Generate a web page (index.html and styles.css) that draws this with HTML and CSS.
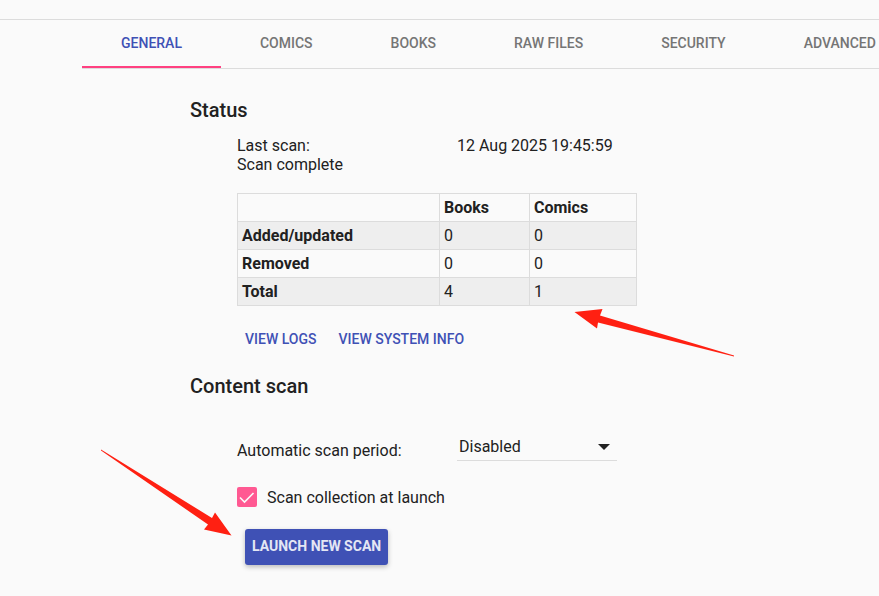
FILE: index.html
```html
<!DOCTYPE html>
<html lang="en">
<head>
<meta charset="utf-8">
<title>Settings</title>
<link rel="stylesheet" href="styles.css">
</head>
<body>
<header class="topbar"></header>
<nav class="tabs">
  <a class="tab active" href="#general">GENERAL</a>
  <a class="tab" href="#comics">COMICS</a>
  <a class="tab" href="#books">BOOKS</a>
  <a class="tab" href="#raw">RAW FILES</a>
  <a class="tab" href="#security">SECURITY</a>
  <a class="tab" href="#advanced">ADVANCED</a>
</nav>
<main class="content">
  <section>
    <h2>Status</h2>
    <div class="group">
      <div class="row"><span class="label">Last scan:</span><span>12 Aug 2025 19:45:59</span></div>
      <div class="row">Scan complete</div>
      <table class="stats">
        <thead>
          <tr><td class="name"></td><th class="books" scope="col">Books</th><th scope="col">Comics</th></tr>
        </thead>
        <tbody>
          <tr class="shaded"><th scope="row">Added/updated</th><td>0</td><td>0</td></tr>
          <tr><th scope="row">Removed</th><td>0</td><td>0</td></tr>
          <tr class="shaded"><th scope="row">Total</th><td>4</td><td>1</td></tr>
        </tbody>
      </table>
      <div class="links">
        <a href="#logs">VIEW LOGS</a>
        <a href="#system">VIEW SYSTEM INFO</a>
      </div>
    </div>
  </section>
  <section>
    <h2>Content scan</h2>
    <div class="group">
      <div class="field">
        <label class="label" for="period">Automatic scan period:</label>
        <div class="picker">
          <select id="period"><option>Disabled</option></select>
          <svg class="caret" width="12" height="6" viewBox="0 0 12 6"><path d="M0 0h12L6 6z" fill="#212121"/></svg>
        </div>
      </div>
      <label class="check">
        <span class="box">
          <input type="checkbox" checked>
          <svg class="tick" width="20" height="20" viewBox="0 0 20 20"><path d="M3 10.500L7.500 15L16.500 6" fill="none" stroke="#fafafa" stroke-width="1.600"/></svg>
        </span>
        <span>Scan collection at launch</span>
      </label>
      <button class="launch" type="button">LAUNCH NEW SCAN</button>
    </div>
  </section>
  <section>
    <h2>Theme</h2>
  </section>
</main>
<svg class="arrow arrow-total" width="160" height="49" viewBox="574 308 160 49"><path d="M574.500 312L602.500 309L600 315.500L734 355.500V356.500L598 322.500L597 328.500Z" fill="#ff2012"/></svg>
<svg class="arrow arrow-launch" width="132" height="88" viewBox="100 449 132 88"><path d="M101 449.500L212 518L215 512.500L231.500 535.500L204 529.500L208 524.500L101 450.500Z" fill="#ff2012"/></svg>
</body>
</html>
```
FILE: styles.css
```css
* {
  box-sizing: border-box;
}

body {
  position: relative;
  margin: 0;
  height: 100vh;
  overflow: hidden;
  background: #fafafa;
  color: #212121;
  font: 16px/19px Roboto, sans-serif;
}

a {
  color: #3f51b5;
  text-decoration: none;
}

.topbar {
  height: 20px;
  border-bottom: 1px solid #dcdcdc;
}

.tabs {
  display: flex;
  margin-left: 82px;
  height: 49px;
  border-bottom: 1px solid #dcdcdc;
  overflow: hidden;
}

.tab {
  flex: none;
  padding: 0 39px;
  border-bottom: 2px solid transparent;
  color: #757575;
  font-size: 14px;
  font-weight: 500;
  line-height: 46px;
}

.tab.active {
  color: #3f51b5;
  border-bottom-color: #ff4081;
}

.content {
  padding: 29px 0 0 190px;
}

h2 {
  margin: 0;
  font-size: 20px;
  font-weight: 500;
  line-height: 24px;
}

.group {
  padding: 14px 0 0 47px;
}

.row {
  display: flex;
}

.label {
  width: 220px;
}

.stats {
  width: 400px;
  margin-top: 19px;
  border-collapse: collapse;
}

.stats th,
.stats td {
  height: 28px;
  padding: 4px;
  border: 1px solid #dcdcdc;
  text-align: left;
}

.stats .name {
  width: 202px;
}

.stats .books {
  width: 90px;
}

.shaded {
  background: #eeeeee;
}

.links {
  display: flex;
  gap: 22px;
  padding: 24px 0 25px 8px;
  font-size: 14px;
  font-weight: 500;
}

.field {
  display: flex;
  align-items: flex-end;
  margin-top: 22px;
}

.field .label {
  padding-bottom: 1px;
}

.picker {
  position: relative;
  width: 160px;
  border-bottom: 1px solid #dcdcdc;
}

.picker select {
  display: block;
  width: 100%;
  height: 26px;
  margin: 0;
  padding: 0 2px 2px;
  border: 0;
  appearance: none;
  background: transparent;
  color: inherit;
  font: inherit;
}

.caret {
  position: absolute;
  right: 7px;
  top: 10px;
  pointer-events: none;
}

.check {
  display: flex;
  align-items: center;
  gap: 10px;
  margin-top: 26px;
}

.box {
  position: relative;
  width: 20px;
  height: 20px;
}

.check input {
  display: block;
  width: 100%;
  height: 100%;
  margin: 0;
  border-radius: 2px;
  appearance: none;
  background: #ff5992;
}

.tick {
  position: absolute;
  inset: 0;
  pointer-events: none;
}

.launch {
  display: block;
  height: 36px;
  margin: 22px 0 27px 8px;
  padding: 0 7px 2px;
  border: 0;
  border-radius: 3px;
  background: #3f51b5;
  box-shadow: 0 2px 5px rgba(0, 0, 0, 0.26);
  color: #e4e6f4;
  font: 700 14px/34px Roboto, sans-serif;
}

.arrow {
  position: absolute;
}

.arrow-total {
  left: 574px;
  top: 308px;
}

.arrow-launch {
  left: 100px;
  top: 449px;
}
```
